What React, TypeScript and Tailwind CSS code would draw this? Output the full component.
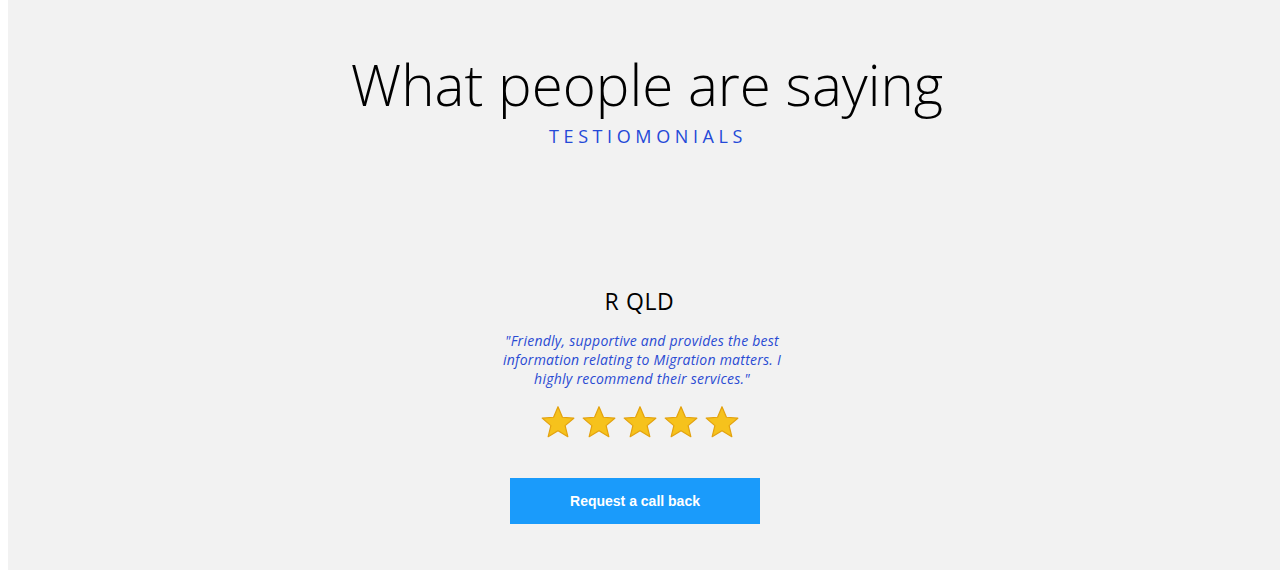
const quote =
  '"Friendly, supportive and provides the best information relating to Migration matters. I highly recommend their services."';

function Star() {
  return (
    <svg viewBox="0 0 24 24" className="h-[36px] w-[36px]" aria-hidden="true">
      <path
        d="M12 1.8l2.95 7.05 7.6.6-5.8 4.95 1.8 7.4L12 17.8l-6.55 3.99 1.8-7.4-5.8-4.95 7.6-.6z"
        fill="#f6c21c"
        stroke="#e3a20e"
        strokeWidth="0.8"
        strokeLinejoin="round"
      />
    </svg>
  );
}

export default function App() {
  return (
    <div className="min-h-[570px] bg-white pl-2">
      <section className="flex min-h-[570px] flex-col items-center bg-[#f2f2f2] font-['Open_Sans',sans-serif]">
        <h1 className="mt-[50px] pl-[6px] text-[56.5px] font-light leading-[70px] text-black">
          What people are saying
        </h1>
        <p className="mt-[4px] pl-[8px] text-[18px] uppercase leading-[24px] tracking-[4.6px] text-[#2449d8]">
          Testiomonials
        </p>

        <div className="mt-[138px] flex w-[300px] flex-col items-center">
          <h3 className="pr-[9px] text-[23px] tracking-[0.6px] leading-[30px] text-black">R QLD</h3>
          <p className="mt-[15px] pr-[4px] text-center text-[14px] italic leading-[19px] tracking-[0.25px] text-[#2a4bd3]">
            {quote}
          </p>
          <div className="mt-[16px] mr-[8px] flex gap-[5px]">
            <Star />
            <Star />
            <Star />
            <Star />
            <Star />
          </div>
        </div>

        <button className="mt-[38px] mr-[18px] h-[46px] w-[250px] bg-[#1a9bfb] font-['Liberation_Sans',sans-serif] text-[14px] font-bold text-white">
          Request a call back
        </button>
      </section>
    </div>
  );
}
